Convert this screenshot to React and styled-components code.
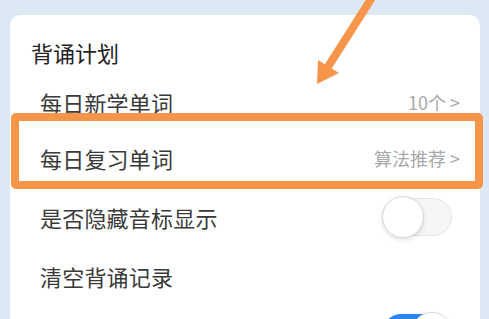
import React, { useState } from "react";
import styled, { createGlobalStyle } from "styled-components";

const GlobalStyle = createGlobalStyle`
  html, body {
    margin: 0;
    padding: 0;
    background: #dde8f5;
    overflow: hidden;
  }
  body {
    font-family: "Noto Sans CJK SC", "Noto Sans", sans-serif;
  }
`;

const Page = styled.div`
  position: relative;
  width: 489px;
  height: 319px;
  padding: 15px 9px 0 10px;
  box-sizing: border-box;
  overflow: hidden;
`;

const Card = styled.div`
  background: #fff;
  border-radius: 10px;
  height: 340px;
`;

const Title = styled.div`
  padding: 22px 0 8px 21px;
  font-size: 22px;
  line-height: 30px;
  color: #222;
`;

const Row = styled.div`
  display: flex;
  align-items: center;
  justify-content: space-between;
  height: ${(p) => p.h || 57}px;
  padding: 0 28px 0 30px;
`;

const Label = styled.span`
  font-size: 22px;
  color: #3a3a3a;
  letter-spacing: 0.2px;
`;

const Extra = styled.span`
  font-size: 18px;
  color: #a8a8a8;
  margin-right: -8px;
`;

const Track = styled.div`
  position: relative;
  width: 70px;
  height: 38px;
  border-radius: 19px;
  box-sizing: border-box;
  background: ${(p) => (p.on ? "#2b85f0" : "#f6f6f6")};
  border: 1px solid ${(p) => (p.on ? "#2b85f0" : "#e6e6e6")};
`;

const Knob = styled.div`
  position: absolute;
  top: -3px;
  ${(p) => (p.on ? "right: -2px;" : "left: -1px;")}
  width: 42px;
  height: 42px;
  border-radius: 50%;
  background: #fff;
  border: 1px solid #d8d8d8;
  box-sizing: border-box;
  box-shadow: 0 2px 4px rgba(0, 0, 0, 0.12);
`;

const Highlight = styled.div`
  position: absolute;
  left: 11px;
  top: 113px;
  width: 472px;
  height: 76px;
  border: 8px solid #f7964b;
  border-radius: 5px;
  box-sizing: border-box;
  pointer-events: none;
`;

const ArrowSvg = styled.svg`
  position: absolute;
  left: 0;
  top: 0;
  pointer-events: none;
`;

const Toggle = ({ on }) => (
  <Track on={on ? 1 : 0}>
    <Knob on={on ? 1 : 0} />
  </Track>
);

export default function App() {
  const [hide] = useState(false);
  return (
    <>
      <GlobalStyle />
      <Page>
        <Card>
          <Title>背诵计划</Title>
          <Row h={54}>
            <Label>每日新学单词</Label>
            <Extra>10个 &gt;</Extra>
          </Row>
          <Row h={58}>
            <Label>每日复习单词</Label>
            <Extra>算法推荐 &gt;</Extra>
          </Row>
          <Row h={60}>
            <Label>是否隐藏音标显示</Label>
            <Toggle on={hide} />
          </Row>
          <Row h={57}>
            <Label>清空背诵记录</Label>
          </Row>
          <Row h={57}>
            <Label></Label>
            <Toggle on />
          </Row>
        </Card>
        <Highlight />
        <ArrowSvg width="489" height="100" viewBox="0 0 489 100">
          <line x1="373" y1="-4" x2="326" y2="70" stroke="#f7964b" strokeWidth="8" />
          <polygon points="317,84 318,60 339,73" fill="#f7964b" />
        </ArrowSvg>
      </Page>
    </>
  );
}
